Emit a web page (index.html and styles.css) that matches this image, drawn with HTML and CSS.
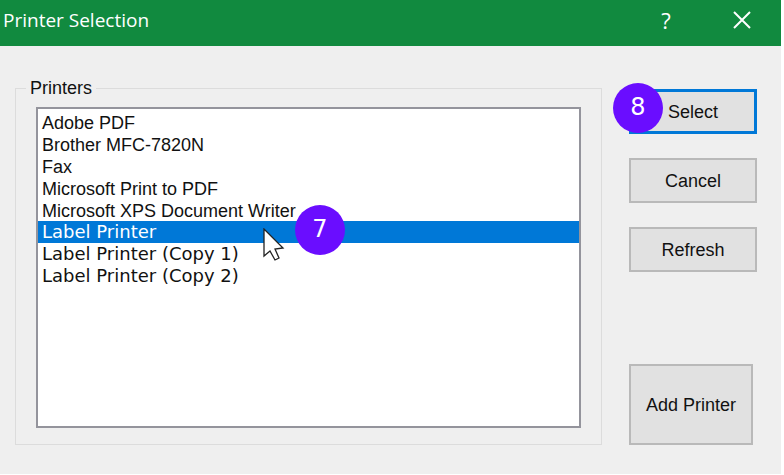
FILE: index.html
```html
<!DOCTYPE html>
<html lang="en">
<head>
    <meta charset="UTF-8">
    <meta name="viewport" content="width=device-width, initial-scale=1.0">
    <title>Printer Selection</title>
    <link rel="stylesheet" href="styles.css">
</head>
<body>
    <div class="dialog">
        <header class="titlebar">
            <h1>Printer Selection</h1>
            <button class="title-button" aria-label="Help">?</button>
            <button class="title-button" aria-label="Close">
                <svg width="18" height="18" viewBox="0 0 18 18">
                    <path d="M1 1 L17 17 M17 1 L1 17" stroke="#fff" stroke-width="2" fill="none"/>
                </svg>
            </button>
        </header>
        <main class="content">
            <fieldset class="printers">
                <legend><label for="printer-list">Printers</label></legend>
                <div class="list-wrap">
                    <select id="printer-list" class="printer-list" size="8">
                        <option>Adobe PDF</option>
                        <option>Brother MFC-7820N</option>
                        <option>Fax</option>
                        <option>Microsoft Print to PDF</option>
                        <option>Microsoft XPS Document Writer</option>
                        <option class="label-printer" selected>Label Printer</option>
                        <option class="label-printer">Label Printer (Copy 1)</option>
                        <option class="label-printer">Label Printer (Copy 2)</option>
                    </select>
                    <svg class="cursor" width="22" height="34" viewBox="0 0 22 34">
                        <path d="M1 1 V28 L7 23 L12 32 L16 30 L12 21 L20 20 Z" fill="#fff" stroke="#222" stroke-width="1.3"/>
                    </svg>
                    <span class="step step-list">7</span>
                </div>
            </fieldset>
            <div class="actions">
                <div class="select-wrap">
                    <button class="action default">Select</button>
                    <span class="step step-select">8</span>
                </div>
                <button class="action">Cancel</button>
                <button class="action">Refresh</button>
                <button class="action add">Add Printer</button>
            </div>
        </main>
    </div>
</body>
</html>
```
FILE: styles.css
```css
* {
    box-sizing: border-box;
}
body {
    margin: 0;
    background-color: #fff;
    font-family: "Liberation Sans", Arial, sans-serif;
    font-size: 18px;
    color: #111;
}
.dialog {
    display: flex;
    flex-direction: column;
    min-height: calc(100vh - 1px);
    margin: 0 3px 1px 0;
    background-color: #efefef;
}
.titlebar {
    display: flex;
    align-items: center;
    height: 46px;
    padding: 0 1px 6px 3px;
    background-color: #118a3f;
    color: #fff;
    font-family: "Open Sans", "Segoe UI", sans-serif;
}
h1 {
    flex: 1;
    margin: 0;
    font-size: 19px;
    font-weight: normal;
}
.title-button {
    display: flex;
    justify-content: center;
    align-items: center;
    width: 76px;
    height: 40px;
    padding: 0;
    border: none;
    background: none;
    color: #fff;
    font-family: inherit;
    font-size: 22px;
}
.content {
    display: grid;
    grid-template-columns: 1fr 128px;
    gap: 27px;
    padding: 32px 24px 29px 15px;
}
.printers {
    min-width: 0;
    margin: 0;
    padding: 9px 20px 16px 10px;
    border: 1px solid #dcdcdc;
}
legend {
    padding: 0 4px;
    line-height: 20px;
}
.list-wrap {
    position: relative;
    margin-left: 10px;
}
.printer-list {
    display: block;
    width: 100%;
    height: 321px;
    padding: 2px 0;
    border: 2px solid #94949c;
    border-radius: 0;
    outline: none;
    background-color: #fff;
    font-family: inherit;
    font-size: 18px;
    color: #111;
}
.printer-list option {
    height: 22px;
    padding: 2px 4px 0;
    line-height: 20px;
}
.printer-list .label-printer {
    padding-top: 0;
    font-family: "DejaVu Sans", Verdana, sans-serif;
    font-size: 18px;
    line-height: 22px;
}
.printer-list option:checked {
    background: linear-gradient(#0078d7, #0078d7);
    -webkit-text-fill-color: #fff;
}
.cursor {
    position: absolute;
    left: 227px;
    top: 121px;
}
.step {
    position: absolute;
    width: 50px;
    height: 50px;
    border-radius: 50%;
    background-color: #6a0dff;
    color: #fff;
    font-family: "DejaVu Sans", Verdana, sans-serif;
    font-size: 24px;
    line-height: 48px;
    text-align: center;
}
.step-list {
    left: 259px;
    top: 98px;
}
.step-select {
    left: -16px;
    top: -6px;
}
.actions {
    display: flex;
    flex-direction: column;
    gap: 24px;
    padding-top: 11px;
}
.select-wrap {
    position: relative;
}
.action {
    display: block;
    width: 100%;
    height: 45px;
    padding: 2px 0 0;
    border: 2px solid #b9b9b9;
    background-color: #e1e1e1;
    color: #111;
    font-family: inherit;
    font-size: 18px;
}
.default {
    border: 3px solid #0078d7;
}
.add {
    width: 124px;
    height: 81px;
    margin-top: auto;
}
```
